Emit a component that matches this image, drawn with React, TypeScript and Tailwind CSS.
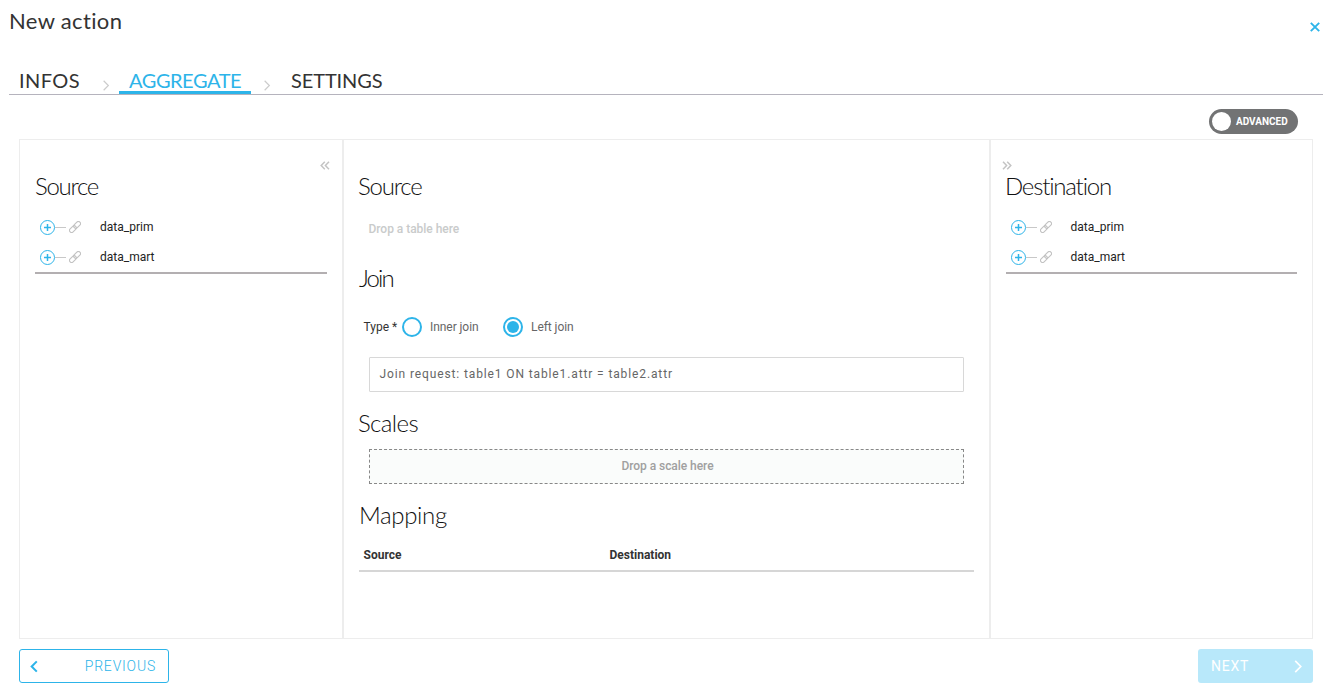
import React from "react";

function Chevron({ className, d = "M2 1l6 6-6 6", width = 1.5 }: { className?: string; d?: string; width?: number }) {
  return (
    <svg viewBox="0 0 10 14" className={className} fill="none" stroke="currentColor" strokeWidth={width}>
      <path d={d} />
    </svg>
  );
}

function DoubleChevron({ flip }: { flip?: boolean }) {
  return (
    <svg viewBox="0 0 10 9" className="block h-[9px] w-[10px] text-[#c4c4c4]" fill="none" stroke="currentColor" strokeWidth="1.5">
      <path d={flip ? "M1 .8l3.6 3.7L1 8.2M5.2.8l3.6 3.7-3.6 3.7" : "M4.8.8L1.2 4.5l3.6 3.7M9 .8L5.4 4.5 9 8.2"} />
    </svg>
  );
}

function Heading({ children, className }: { children: React.ReactNode; className: string }) {
  return (
    <h2 className={`h-[30px] whitespace-nowrap font-['Lato',sans-serif] text-[24px] font-light leading-[28px] text-[#111] [font-variant-ligatures:none] ${className}`}>
      {children}
    </h2>
  );
}

function TreeRow({ label }: { label: string }) {
  return (
    <li className="flex h-[30px] items-center pl-[5px]">
      <svg viewBox="0 0 15 15" className="size-[15px]" fill="none" stroke="#2db4e9">
        <circle cx="7.5" cy="7.5" r="7" />
        <path d="M7.5 4v7M4 7.5h7" strokeWidth="1.5" />
      </svg>
      <span className="h-px w-[11px] bg-[#c8c8c8]" />
      <svg viewBox="0 0 12 12" className="ml-[3px] size-3" fill="none" stroke="#c2c2c2" strokeWidth="1.1">
        <rect x="-3.9" y="-2.1" width="7.8" height="4.2" rx="2.1" transform="translate(3.9 8.1) rotate(-45)" />
        <rect x="-3.9" y="-2.1" width="7.8" height="4.2" rx="2.1" transform="translate(8.1 3.9) rotate(-45)" />
      </svg>
      <span className="ml-[19px] text-[12px] text-[#222]">{label}</span>
    </li>
  );
}

function Tree() {
  return (
    <ul className="mt-[10px] border-b-2 border-[#b3afb1]">
      <TreeRow label="data_prim" />
      <TreeRow label="data_mart" />
    </ul>
  );
}

function Radio({ checked }: { checked?: boolean }) {
  return (
    <span className="flex size-5 shrink-0 items-center justify-center rounded-full border-2 border-[#2db4e9]">
      {checked && <span className="size-3 rounded-full bg-[#2db4e9]" />}
    </span>
  );
}

export default function App() {
  return (
    <div className="flex h-[691px] w-[1331px] flex-col overflow-hidden bg-white font-['Roboto',sans-serif] text-[12px] text-[#333]">
      <header className="flex h-[64px] items-start justify-between pl-[9px] pr-[11px]">
        <h1 className="mt-[6px] font-['Lato',sans-serif] text-[22px] leading-[30px] tracking-[0.35px] text-[#333] [font-variant-ligatures:none]">New action</h1>
        <svg viewBox="0 0 10 10" className="mt-[22px] size-[10px]" stroke="#2db4e9" strokeWidth="1.9">
          <path d="M.8.8l8.4 8.4M9.2.8L.8 9.2" />
        </svg>
      </header>

      <nav className="mx-[9px] mr-2 flex h-[31px] items-end border-b border-[#b5b3bd] font-['Lato',sans-serif] text-[20px] leading-[26px] text-[#333]">
        <span className="h-[30px] w-[93px] pl-[10px] pt-[3px] tracking-[0.4px]">INFOS</span>
        <Chevron className="mb-[3px] h-[11px] w-[8px] text-[#ccc]" />
        <span className="ml-[9px] h-[30px] w-[132px] border-b-[3px] border-[#2db4e9] pl-[10px] pt-[3px] tracking-[-0.45px] text-[#2db4e9]">AGGREGATE</span>
        <Chevron className="mb-[3px] ml-[12px] h-[11px] w-[8px] text-[#ccc]" />
        <span className="ml-[20px] h-[30px] pt-[3px] tracking-[-0.1px]">SETTINGS</span>
      </nav>

      <div className="flex h-[44px] items-start justify-end pr-[33px] pt-[14px]">
        <button className="flex h-[25px] w-[89px] items-center rounded-full bg-[#727374] pl-[3px]">
          <span className="size-[19px] rounded-full bg-white" />
          <span className="ml-[5px] text-[10px] font-bold text-white">ADVANCED</span>
        </button>
      </div>

      <main className="ml-[19px] flex h-[500px] w-[1294px]">
        <section className="w-[324px] border border-[#ededed] px-[15px] pt-[21px]">
          <div className="flex h-[11px] justify-end">
            <span className="-mr-[3px]"><DoubleChevron /></span>
          </div>
          <Heading className="tracking-[-1.3px]">Source</Heading>
          <Tree />
        </section>

        <section className="w-[647px] border border-[#ededed] px-[15px] pt-[32px]">
          <Heading className="-ml-px tracking-[-1.2px]">Source</Heading>
          <p className="mt-[17px] h-5 pl-[9.5px] font-medium leading-5 tracking-[-0.03px] text-[#c9cbcb]">Drop a table here</p>
          <Heading className="mt-[25px] tracking-[-1.9px]">Join</Heading>
          <div className="mt-[23px] flex h-5 items-center pl-[4.5px]">
            <span className="w-[38.5px]">Type *</span>
            <Radio />
            <span className="ml-2 w-[73px] tracking-[-0.06px] text-[#666]">Inner join</span>
            <Radio checked />
            <span className="ml-2 tracking-[-0.06px] text-[#666]">Left join</span>
          </div>
          <div className="ml-[10px] mt-[20px] flex h-[35px] w-[595px] items-center rounded-[1px] border border-[#d8d8d8] pb-px pl-[9.5px] tracking-[0.88px] text-[#666]">
            Join request: table1 ON table1.attr = table2.attr
          </div>
          <Heading className="-ml-px mt-[17px] tracking-[-0.6px]">Scales</Heading>
          <div className="ml-[10px] mt-[10px] flex h-[35px] w-[595px] items-center justify-center border border-dashed border-[#888] bg-[#fafcfb] pb-[2px] pl-[2px] font-medium tracking-[-0.05px] text-[#a0a0a0]">
            Drop a scale here
          </div>
          <Heading className="mt-[17px] tracking-[-0.35px]">Mapping</Heading>
          <div className="mt-[14px] flex h-[27px] border-b-2 border-[#d6d6d6] pl-[4.5px] font-bold leading-[20px] text-[#333]">
            <span className="w-[246px]">Source</span>
            <span>Destination</span>
          </div>
        </section>

        <section className="w-[323px] border border-[#ededed] px-[15px] pt-[21px]">
          <div className="h-[11px]">
            <span className="-ml-[4.5px] block"><DoubleChevron flip /></span>
          </div>
          <Heading className="-ml-px tracking-[-1.2px]">Destination</Heading>
          <div className="-ml-[0.5px]"><Tree /></div>
        </section>
      </main>

      <footer className="mt-[10px] flex h-[34px] justify-between pl-[19px] pr-[18px] text-[14px]">
        <button className="flex w-[150px] items-center justify-between rounded-[3px] border border-[#2db4e9] pl-[9px] pr-[12px] tracking-[0.8px] text-[#2db4e9]">
          <Chevron className="h-[13px] w-[10px]" d="M8 1.5L2.5 7 8 12.5" width={2.2} />
          <span className="font-light">PREVIOUS</span>
        </button>
        <button className="flex w-[115px] items-center justify-between rounded-[3px] bg-[#b8e8fa] pl-[13px] pr-[10px] tracking-[0.8px] text-white">
          NEXT
          <Chevron className="h-[13px] w-[10px]" width={1.8} />
        </button>
      </footer>
    </div>
  );
}
